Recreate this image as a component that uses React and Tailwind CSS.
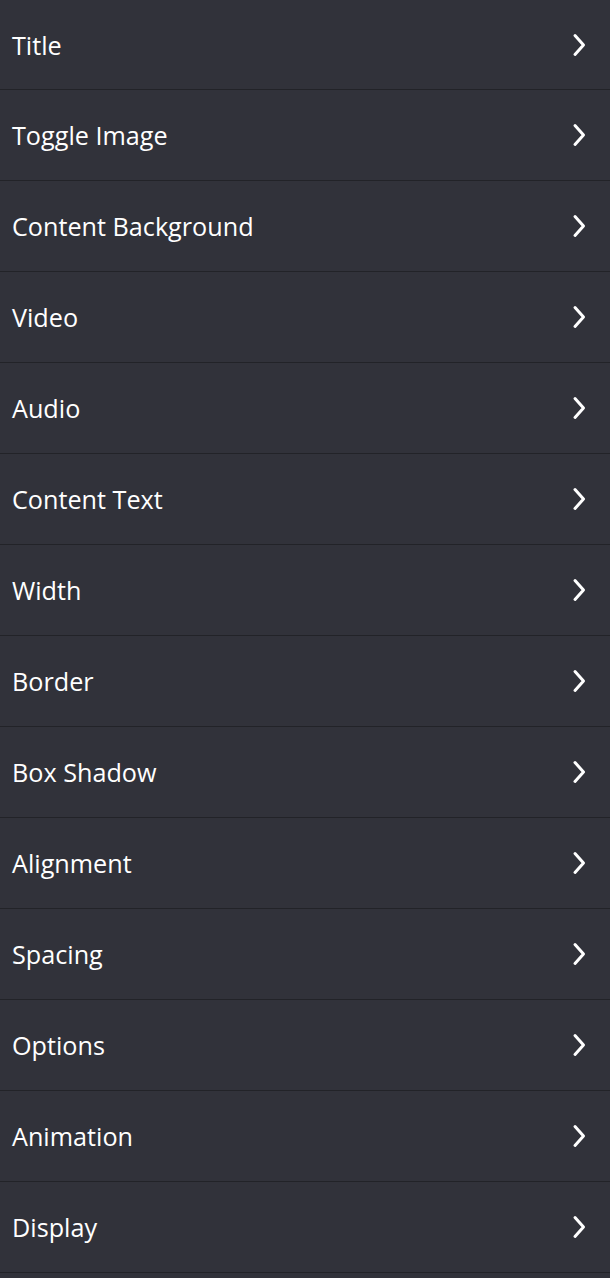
import React from 'react';

const items = [
  'Title',
  'Toggle Image',
  'Content Background',
  'Video',
  'Audio',
  'Content Text',
  'Width',
  'Border',
  'Box Shadow',
  'Alignment',
  'Spacing',
  'Options',
  'Animation',
  'Display',
];

function Chevron() {
  return (
    <svg width="14" height="24" viewBox="0 0 14 24" fill="none" className="shrink-0">
      <path d="M3 2.5 L11.5 12 L3 21.5" stroke="#ffffff" strokeWidth="3" strokeLinecap="round" strokeLinejoin="round" />
    </svg>
  );
}

export default function App() {
  return (
    <div className="min-h-screen w-full bg-[#31323a]" style={{ fontFamily: '"Open Sans", sans-serif' }}>
      {items.map((label, i) => (
        <div
          key={label}
          className={`flex items-center justify-between border-b border-[#222328] pl-3 pr-[24px] text-[25.2px] text-white ${i === 0 ? 'h-[90px]' : 'h-[91px]'}`}
        >
          <span className="pt-[2px]">{label}</span>
          <Chevron />
        </div>
      ))}
    </div>
  );
}
